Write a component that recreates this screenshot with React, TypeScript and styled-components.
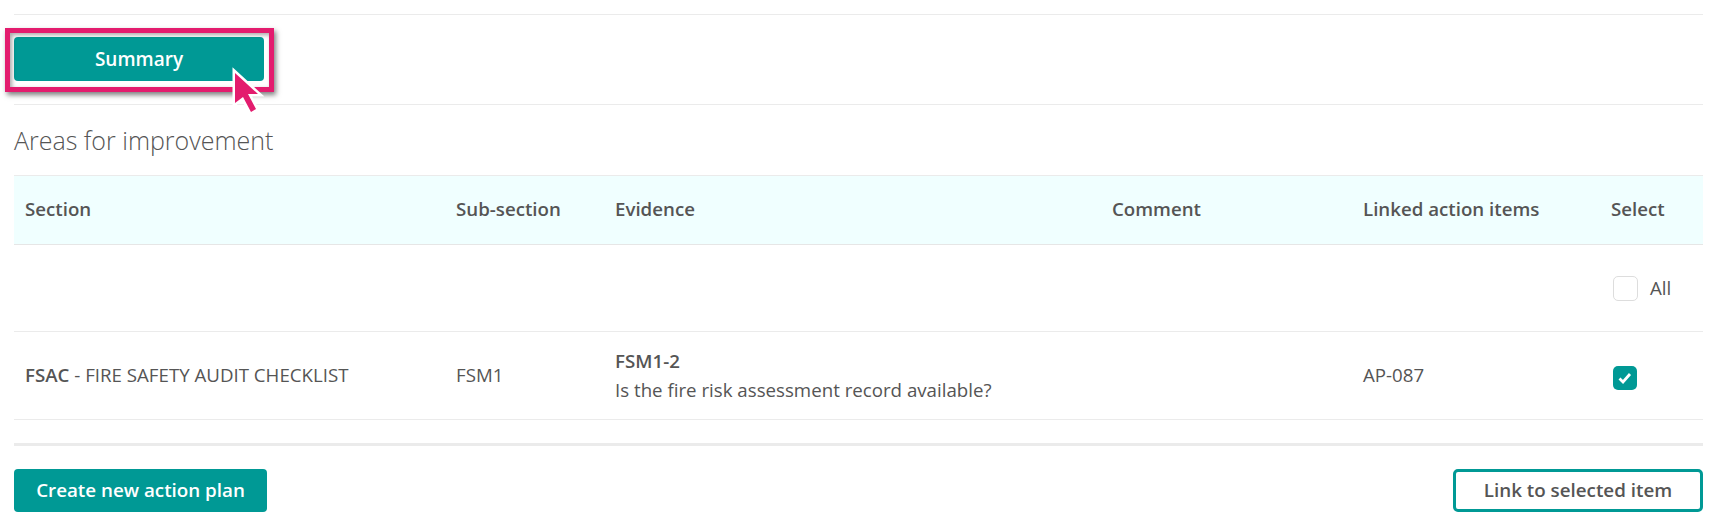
import styled, { createGlobalStyle } from 'styled-components';

const GlobalStyle = createGlobalStyle`
  html, body {
    margin: 0;
    padding: 0;
    background: #fff;
    overflow: hidden;
  }
  body {
    font-family: "Open Sans", "Liberation Sans", sans-serif;
    color: #555;
  }
`;

const columns = '431px 159px 497px 251px 248px 1fr';

export default function App() {
  return (
    <Page>
      <GlobalStyle />
      <SummaryBar>
        <Highlight />
        <SummaryButton>Summary</SummaryButton>
        <Pointer viewBox="0 0 38 54" aria-hidden="true">
          <path
            d="M5 11 L5 41 L13 35 L21 50 L26 47 L18 32 L28 32 Z"
            fill="#e31c6e"
            stroke="#fff"
            strokeWidth="5"
            strokeLinejoin="miter"
            paintOrder="stroke"
          />
        </Pointer>
      </SummaryBar>
      <Title>Areas for improvement</Title>
      <Table>
        <HeaderRow>
          <span>Section</span>
          <span>Sub-section</span>
          <span>Evidence</span>
          <span>Comment</span>
          <span>Linked action items</span>
          <span>Select</span>
        </HeaderRow>
        <FilterRow>
          <span />
          <span />
          <span />
          <span />
          <span />
          <AllLabel>
            <EmptyBox />
            All
          </AllLabel>
        </FilterRow>
        <DataRow>
          <span>
            <strong>FSAC</strong> - FIRE SAFETY AUDIT CHECKLIST
          </span>
          <span>FSM1</span>
          <Evidence>
            <strong>FSM1-2</strong>
            <span>Is the fire risk assessment record available?</span>
          </Evidence>
          <span />
          <span>AP-087</span>
          <CheckedBox>
            <svg width="14" height="12" viewBox="0 0 14 12" aria-hidden="true">
              <path d="M1.5 6.5 L5 10 L12 2" fill="none" stroke="#fff" strokeWidth="2.8" />
            </svg>
          </CheckedBox>
        </DataRow>
      </Table>
      <Footer>
        <PrimaryButton>Create new action plan</PrimaryButton>
        <OutlineButton>Link to selected item</OutlineButton>
      </Footer>
    </Page>
  );
}

const Page = styled.div`
  width: 1689px;
  height: 522px;
  margin-left: 14px;
  padding-top: 14px;
  box-sizing: border-box;
`;

const SummaryBar = styled.div`
  position: relative;
  height: 91px;
  padding-top: 22px;
  box-sizing: border-box;
  border-top: 1px solid #ebebeb;
  border-bottom: 1px solid #ebebeb;
`;

const Highlight = styled.div`
  position: absolute;
  left: -9px;
  top: 13px;
  width: 269px;
  height: 64px;
  box-sizing: border-box;
  border: 5px solid #e31c6e;
  box-shadow: 2px 3px 5px rgba(0, 0, 0, 0.5), inset 2px 2px 4px rgba(0, 0, 0, 0.35);
`;

const SummaryButton = styled.button`
  display: block;
  width: 250px;
  height: 44px;
  border: none;
  border-radius: 4px;
  background: #009995;
  color: #fff;
  font: 600 19px "Open Sans", "Liberation Sans", sans-serif;
`;

const Pointer = styled.svg`
  position: absolute;
  left: 216px;
  top: 47px;
  width: 38px;
  height: 54px;
`;

const Title = styled.h2`
  margin: 0;
  height: 70px;
  padding-top: 20px;
  box-sizing: border-box;
  font-size: 25px;
  line-height: 30px;
  font-weight: 300;
  color: #555;
`;

const Table = styled.div`
  border-top: 1px solid #ebebeb;
  border-bottom: 1px solid #ebebeb;
  font-size: 18.7px;
`;

const Row = styled.div`
  display: grid;
  grid-template-columns: ${columns};
  align-items: center;
  padding-left: 11px;
  padding-bottom: 2px;
  box-sizing: border-box;

  strong {
    font-weight: 600;
  }
`;

const HeaderRow = styled(Row)`
  height: 69px;
  padding-bottom: 4px;
  background: #f0ffff;
  border-bottom: 1px solid #e6e6e6;
  font-weight: 600;
`;

const FilterRow = styled(Row)`
  height: 87px;
  border-bottom: 1px solid #ebebeb;
`;

const DataRow = styled(Row)`
  height: 87px;
`;

const AllLabel = styled.label`
  display: flex;
  align-items: center;
  gap: 12px;
  margin-left: 2px;
`;

const EmptyBox = styled.span`
  width: 25px;
  height: 25px;
  margin-top: 2px;
  box-sizing: border-box;
  border: 1px solid #ddd;
  border-radius: 5px;
`;

const CheckedBox = styled.span`
  display: flex;
  align-items: center;
  justify-content: center;
  width: 24px;
  height: 24px;
  margin-left: 2px;
  margin-top: 6px;
  border-radius: 5px;
  background: #009995;
`;

const Evidence = styled.div`
  display: flex;
  flex-direction: column;
  gap: 4px;
  line-height: 25px;
`;

const Footer = styled.div`
  display: flex;
  justify-content: space-between;
  align-items: center;
  margin-top: 23px;
  padding-top: 23px;
  border-top: 3px solid #ebebeb;
`;

const PrimaryButton = styled.button`
  width: 253px;
  height: 43px;
  padding: 0 0 2px;
  border: none;
  border-radius: 4px;
  background: #009995;
  color: #fff;
  font: 600 18.8px "Open Sans", "Liberation Sans", sans-serif;
`;

const OutlineButton = styled.button`
  width: 250px;
  height: 43px;
  padding: 0 0 2px;
  box-sizing: border-box;
  border: 3px solid #009995;
  border-radius: 5px;
  background: #fff;
  color: #555;
  font: 600 18.8px "Open Sans", "Liberation Sans", sans-serif;
`;
